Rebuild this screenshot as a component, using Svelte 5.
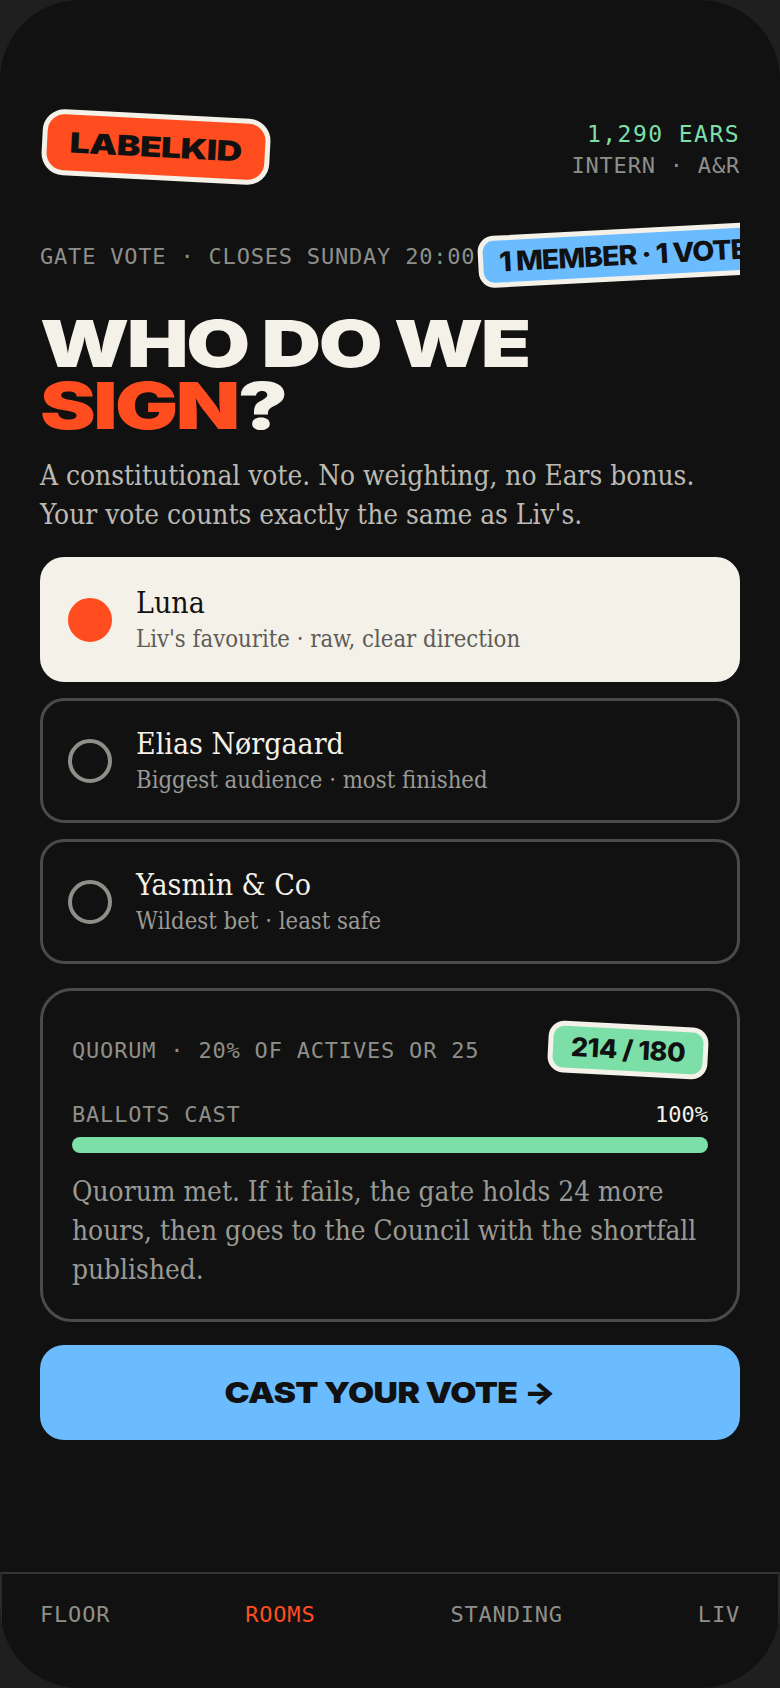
<script>
  const options = [
    { name: "Luna", note: "Liv's favourite · raw, clear direction", picked: true },
    { name: "Elias Nørgaard", note: "Biggest audience · most finished" },
    { name: "Yasmin & Co", note: "Wildest bet · least safe" }
  ];
  const tabs = ["FLOOR", "ROOMS", "STANDING", "LIV"];
</script>

<div class="phone">
  <main>
    <header>
      <div class="sticker logo"><span>LABELKID</span></div>
      <div class="who">
        <div class="ears">1,290 EARS</div>
        <div class="rank">INTERN · A&amp;R</div>
      </div>
    </header>

    <div class="gate">
      <span class="closes">GATE VOTE · CLOSES SUNDAY 20:00</span>
      <div class="sticker rule"><span>1 MEMBER · 1 VOTE</span></div>
    </div>

    <h1><span>WHO DO WE</span><br /><span class="second"><em>SIGN</em>?</span></h1>
    <p class="lead">A constitutional vote. No weighting, no Ears bonus.<br />Your vote counts exactly the same as Liv's.</p>

    <div class="options">
      {#each options as o}
        <div class="option" class:picked={o.picked}>
          <div class="radio"></div>
          <div>
            <div class="name">{o.name}</div>
            <div class="note">{o.note}</div>
          </div>
        </div>
      {/each}
    </div>

    <section class="quorum">
      <div class="qhead">
        <span>QUORUM · 20% OF ACTIVES OR 25</span>
        <div class="sticker count"><span>214 / 180</span></div>
      </div>
      <div class="bar-label"><span>BALLOTS CAST</span><b>100%</b></div>
      <div class="bar"><div class="fill" style="width: 100%"></div></div>
      <p>Quorum met. If it fails, the gate holds 24 more hours, then goes to the Council with the shortfall published.</p>
    </section>

    <button class="cast"><span>CAST YOUR VOTE →</span></button>
  </main>

  <nav>
    {#each tabs as t}
      <span class:on={t === "ROOMS"}>{t}</span>
    {/each}
  </nav>
</div>

<style>
  :global(body) {
    margin: 0;
    background: #1f1f1f;
  }

  .phone {
    width: 780px;
    height: 1688px;
    box-sizing: border-box;
    background: #111;
    border-radius: 80px;
    display: flex;
    flex-direction: column;
    overflow: hidden;
    font-family: "DejaVu Sans Mono", monospace;
    color: #f4f1e9;
  }

  main {
    flex: 1;
    padding: 110px 40px 0;
  }

  header {
    display: flex;
    justify-content: space-between;
    align-items: flex-start;
  }

  .sticker {
    font-family: Inter, sans-serif;
    font-weight: 900;
    color: #111;
    border: 5px solid #f4f1e9;
    box-sizing: border-box;
    white-space: nowrap;
  }

  .sticker span {
    display: inline-block;
  }

  .logo {
    width: 228px;
    height: 66px;
    margin: 4px 0 0 2px;
    background: #ff4d1f;
    border-radius: 22px;
    transform: rotate(3deg);
    font-size: 28px;
    text-align: center;
    line-height: 56px;
    letter-spacing: -0.5px;
  }

  .logo span {
    transform: scaleX(1.27);
  }

  .who {
    text-align: right;
    padding-top: 8px;
  }

  .ears {
    font-size: 23px;
    line-height: 32px;
    color: #7ddfa8;
    letter-spacing: 1.45px;
  }

  .rank {
    font-size: 22px;
    line-height: 32px;
    color: #8f8f8a;
    letter-spacing: 0.8px;
  }

  .gate {
    display: flex;
    align-items: center;
    gap: 3px;
    margin-top: 36px;
    height: 70px;
    overflow: hidden;
    white-space: nowrap;
  }

  .closes {
    font-size: 22px;
    color: #8f8f8a;
    letter-spacing: 0.8px;
    flex: none;
    margin-top: 6px;
  }

  .rule {
    flex: none;
    width: 290px;
    height: 52px;
    margin-top: 4px;
    background: #6bbcff;
    border-radius: 16px;
    transform: rotate(-3deg);
    font-size: 27px;
    font-weight: 800;
    line-height: 44px;
    padding-left: 16px;
    letter-spacing: -1px;
  }

  .rule span {
    transform: scaleX(1.06);
    transform-origin: left;
  }

  h1 {
    margin: 25px 0 0;
    font-family: Inter, sans-serif;
    font-weight: 900;
    font-size: 65px;
    line-height: 62px;
    letter-spacing: -2px;
  }

  h1 span {
    display: inline-block;
    transform: scaleX(1.27);
    transform-origin: left;
  }

  h1 .second {
    transform: scaleX(1.29);
  }

  h1 em {
    font-style: normal;
    color: #ff4d1f;
  }

  .lead {
    margin: 19px 0 0;
    font-family: "DejaVu Serif Condensed", "DejaVu Serif", serif;
    font-size: 27.8px;
    line-height: 39px;
    color: #bcbab3;
  }

  .options {
    display: flex;
    flex-direction: column;
    gap: 16px;
    margin-top: 23px;
  }

  .option {
    height: 125px;
    box-sizing: border-box;
    border: 3px solid #4a4a4a;
    border-radius: 24px;
    display: flex;
    align-items: center;
    gap: 24px;
    padding: 0 25px;
    font-family: "DejaVu Serif Condensed", "DejaVu Serif", serif;
  }

  .option.picked {
    background: #f4f1e9;
    border-color: #f4f1e9;
    color: #111;
  }

  .radio {
    width: 44px;
    height: 44px;
    box-sizing: border-box;
    border: 4px solid #8f8f8a;
    border-radius: 50%;
    flex: none;
  }

  .picked .radio {
    background: #ff4d1f;
    border-color: #ff4d1f;
  }

  .name {
    font-size: 30px;
    line-height: 38px;
  }

  .note {
    font-size: 23.7px;
    line-height: 34px;
    color: #9a9a95;
  }

  .picked .note {
    color: #5e5c57;
  }

  .quorum {
    margin-top: 24px;
    height: 334px;
    box-sizing: border-box;
    border: 3px solid #4a4a4a;
    border-radius: 32px;
    padding: 33px 29px 0;
  }

  .qhead {
    display: flex;
    justify-content: space-between;
    align-items: center;
    font-size: 22px;
    letter-spacing: 0.8px;
    color: #8f8f8a;
  }

  .count {
    width: 160px;
    height: 52px;
    background: #7ddfa8;
    border-radius: 16px;
    transform: rotate(3deg);
    font-size: 26px;
    font-weight: 800;
    line-height: 42px;
    text-align: center;
    letter-spacing: -0.5px;
  }

  .count span {
    transform: scaleX(1.04);
  }

  .bar-label {
    display: flex;
    justify-content: space-between;
    margin-top: 27px;
    font-size: 22px;
    line-height: 24px;
    letter-spacing: 0.8px;
    color: #8f8f8a;
  }

  .bar-label b {
    font-weight: 400;
    color: #f4f1e9;
    letter-spacing: 0;
  }

  .bar {
    height: 16px;
    margin-top: 10px;
    background: #333;
    border-radius: 8px;
    overflow: hidden;
  }

  .fill {
    height: 100%;
    background: #7ddfa8;
  }

  .quorum p {
    margin: 19px 0 0;
    font-family: "DejaVu Serif Condensed", "DejaVu Serif", serif;
    font-size: 27.8px;
    line-height: 39px;
    color: #9a9a95;
  }

  .cast {
    display: block;
    width: 100%;
    height: 95px;
    margin-top: 23px;
    border: 0;
    background: #6bbcff;
    border-radius: 24px;
    font-family: Inter, sans-serif;
    font-weight: 900;
    font-size: 29px;
    letter-spacing: -0.5px;
    color: #111;
  }

  .cast span {
    display: inline-block;
    transform: scaleX(1.165);
  }

  nav {
    height: 116px;
    box-sizing: border-box;
    border-top: 2px solid #333;
    border-left: 2px solid #2a2a2a;
    border-right: 2px solid #2a2a2a;
    padding: 28px 38px 0;
    display: flex;
    justify-content: space-between;
    align-items: flex-start;
    font-size: 22px;
    letter-spacing: 0.8px;
    color: #8f8f8a;
  }

  nav .on {
    color: #ff4d1f;
  }
</style>
